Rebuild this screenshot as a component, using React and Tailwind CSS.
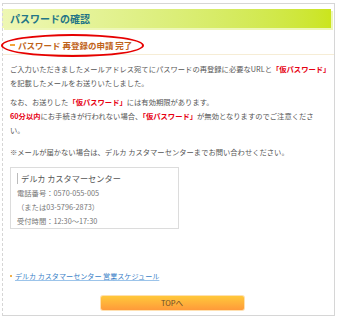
export default function App() {
  const red = "text-[#e60012] font-bold";
  return (
    <div className="relative w-[346px] h-[330px] bg-white text-[#555] [font-family:'Noto_Sans_CJK_JP','Noto_Sans',sans-serif]">
      <div className="absolute left-[2px] top-[3px] w-[333px] h-[313px] border border-[#d6d6d6] [border-left-style:dashed] pointer-events-none" />
      <div className="pt-[9px] pl-[2px]">
        <div className="w-[329px] h-[19px] flex items-center pl-[8px] bg-gradient-to-r from-[#eef7b4] to-[#cbe51c] shadow-[2px_2px_0_#eef7b8]">
          <span className="text-[10px] font-bold text-[#237587] leading-none">パスワードの確認</span>
        </div>
      </div>
      <div className="relative mt-[8px] ml-[3px] w-[331px] h-[19px] border-b border-[#f6edd6] flex items-center pl-[7px]">
        <span className="w-[5px] h-[2px] bg-[#f2a63a] mr-[3px]" />
        <span className="text-[8.5px] font-bold text-[#bf6319] leading-none">パスワード 再登録の申請 完了</span>
      </div>
      <div className="absolute left-[1px] top-[34px] w-[143px] h-[23px] rounded-[50%] border-2 border-[#e60000]" />
      <div className="pl-[10px] pr-[10px] pt-[7px] text-[7.3px] leading-[14px]">
        <p>ご入力いただきましたメールアドレス宛てにパスワードの再登録に必要なURLと<span className={red}>「仮パスワード」</span>を記載したメールをお送りいたしました。</p>
        <p className="mt-[5px]">なお、お送りした<span className={red}>「仮パスワード」</span>には有効期限があります。<br /><span className={red}>60分以内</span>にお手続きが行われない場合、<span className={red}>「仮パスワード」</span>が無効となりますのでご注意くださ<br />い。</p>
        <p className="mt-[8px]">※メールが届かない場合は、デルカ カスタマーセンターまでお問い合わせください。</p>
        <div className="mt-[8px] w-[169px] h-[62px] border border-[#dcdcdc] pl-[6px] pt-[5px]">
          <div className="border-l border-[#bbb] pl-[3px] text-[8.2px] leading-[11px] text-[#555]">デルカ カスタマーセンター</div>
          <div className="text-[7.3px] leading-[14px] text-[#777]">
            <div className="mt-[2px]">電話番号：0570-055-005</div>
            <div>（または03-5796-2873）</div>
            <div>受付時間：12:30～17:30</div>
          </div>
        </div>
        <div className="mt-[40px] flex items-center">
          <span className="w-[2px] h-[2px] bg-[#f2b04a] mr-[3px]" />
          <span className="text-[7.1px] text-[#3a7fc8] underline decoration-[#9cc4ea]">デルカ カスタマーセンター 営業スケジュール</span>
        </div>
      </div>
      <div className="mt-[12px] flex justify-center">
        <div className="ml-[-2px] w-[145px] h-[16px] rounded-[3px] p-[1px] bg-[#ffe0b0]">
          <div className="w-full h-full rounded-[2px] bg-gradient-to-b from-[#ffc83a] to-[#ff9a3a] flex items-center justify-center text-[7.5px] text-[#6a4a2a] leading-none">TOPへ</div>
        </div>
      </div>
    </div>
  );
}
